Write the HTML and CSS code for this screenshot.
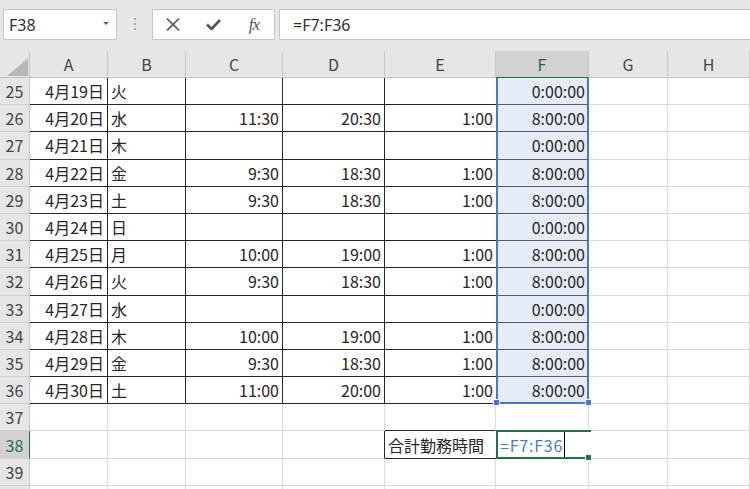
FILE: index.html
```html
<!DOCTYPE html>
<html lang="ja">
<head>
    <meta charset="UTF-8">
    <title>勤務表</title>
    <link rel="stylesheet" href="styles.css">
</head>
<body>
    <div class="topbar">
        <div class="namebox"><span>F38</span><span class="drop"></span></div>
        <div class="grip"><i></i><i></i><i></i></div>
        <div class="fxbox">
            <span class="btn">
                <svg width="14" height="13" viewBox="0 0 14 13"><path d="M1 0.5 L13 12.5 M13 0.5 L1 12.5" stroke="#666" stroke-width="1.8" fill="none"/></svg>
            </span>
            <span class="btn">
                <svg width="15" height="11" viewBox="0 0 15 11"><path d="M1 5.5 L5.5 10 L14 1" stroke="#555" stroke-width="2.6" fill="none"/></svg>
            </span>
            <span class="btn fx">fx</span>
        </div>
        <div class="formula">=F7:F36</div>
    </div>

    <div class="sheet">
        <div class="row hdr">
            <div class="c corner"><svg width="29" height="26" viewBox="0 0 29 26"><polygon points="28,7 28,25 7,25" fill="#b8b8b8"/></svg></div>
            <div class="c ch">A</div>
            <div class="c ch">B</div>
            <div class="c ch">C</div>
            <div class="c ch">D</div>
            <div class="c ch">E</div>
            <div class="c ch on">F</div>
            <div class="c ch">G</div>
            <div class="c ch">H</div>
        </div>

        <div class="row">
            <div class="c rh">25</div>
            <div class="c b r">4月19日</div><div class="c b">火</div>
            <div class="c b r"></div><div class="c b r"></div><div class="c b r nb"></div>
            <div class="c f r">0:00:00</div><div class="c"></div><div class="c"></div>
        </div>
        <div class="row">
            <div class="c rh">26</div>
            <div class="c b r">4月20日</div><div class="c b">水</div>
            <div class="c b r">11:30</div><div class="c b r">20:30</div><div class="c b r nb">1:00</div>
            <div class="c f r">8:00:00</div><div class="c"></div><div class="c"></div>
        </div>
        <div class="row">
            <div class="c rh">27</div>
            <div class="c b r">4月21日</div><div class="c b">木</div>
            <div class="c b r"></div><div class="c b r"></div><div class="c b r nb"></div>
            <div class="c f r">0:00:00</div><div class="c"></div><div class="c"></div>
        </div>
        <div class="row">
            <div class="c rh">28</div>
            <div class="c b r">4月22日</div><div class="c b">金</div>
            <div class="c b r">9:30</div><div class="c b r">18:30</div><div class="c b r nb">1:00</div>
            <div class="c f r">8:00:00</div><div class="c"></div><div class="c"></div>
        </div>
        <div class="row">
            <div class="c rh">29</div>
            <div class="c b r">4月23日</div><div class="c b">土</div>
            <div class="c b r">9:30</div><div class="c b r">18:30</div><div class="c b r nb">1:00</div>
            <div class="c f r">8:00:00</div><div class="c"></div><div class="c"></div>
        </div>
        <div class="row">
            <div class="c rh">30</div>
            <div class="c b r">4月24日</div><div class="c b">日</div>
            <div class="c b r"></div><div class="c b r"></div><div class="c b r nb"></div>
            <div class="c f r">0:00:00</div><div class="c"></div><div class="c"></div>
        </div>
        <div class="row">
            <div class="c rh">31</div>
            <div class="c b r">4月25日</div><div class="c b">月</div>
            <div class="c b r">10:00</div><div class="c b r">19:00</div><div class="c b r nb">1:00</div>
            <div class="c f r">8:00:00</div><div class="c"></div><div class="c"></div>
        </div>
        <div class="row">
            <div class="c rh">32</div>
            <div class="c b r">4月26日</div><div class="c b">火</div>
            <div class="c b r">9:30</div><div class="c b r">18:30</div><div class="c b r nb">1:00</div>
            <div class="c f r">8:00:00</div><div class="c"></div><div class="c"></div>
        </div>
        <div class="row">
            <div class="c rh">33</div>
            <div class="c b r">4月27日</div><div class="c b">水</div>
            <div class="c b r"></div><div class="c b r"></div><div class="c b r nb"></div>
            <div class="c f r">0:00:00</div><div class="c"></div><div class="c"></div>
        </div>
        <div class="row">
            <div class="c rh">34</div>
            <div class="c b r">4月28日</div><div class="c b">木</div>
            <div class="c b r">10:00</div><div class="c b r">19:00</div><div class="c b r nb">1:00</div>
            <div class="c f r">8:00:00</div><div class="c"></div><div class="c"></div>
        </div>
        <div class="row">
            <div class="c rh">35</div>
            <div class="c b r">4月29日</div><div class="c b">金</div>
            <div class="c b r">9:30</div><div class="c b r">18:30</div><div class="c b r nb">1:00</div>
            <div class="c f r">8:00:00</div><div class="c"></div><div class="c"></div>
        </div>
        <div class="row">
            <div class="c rh">36</div>
            <div class="c b r">4月30日</div><div class="c b">土</div>
            <div class="c b r">11:00</div><div class="c b r">20:00</div><div class="c b r nb">1:00</div>
            <div class="c f r last">8:00:00</div><div class="c"></div><div class="c"></div>
        </div>
        <div class="row">
            <div class="c rh">37</div>
            <div class="c"></div><div class="c"></div><div class="c"></div><div class="c"></div>
            <div class="c under"></div><div class="c"></div><div class="c"></div><div class="c"></div>
        </div>
        <div class="row">
            <div class="c rh on">38</div>
            <div class="c"></div><div class="c"></div><div class="c"></div><div class="c boxleft"></div>
            <div class="c box">合計勤務時間</div>
            <div class="c active"><span class="edit">=F7:F36</span></div>
            <div class="c"></div><div class="c"></div>
        </div>
        <div class="row">
            <div class="c rh">39</div>
            <div class="c"></div><div class="c"></div><div class="c"></div><div class="c"></div>
            <div class="c"></div><div class="c"></div><div class="c"></div><div class="c"></div>
        </div>
        <div class="row">
            <div class="c rh"></div>
            <div class="c"></div><div class="c"></div><div class="c"></div><div class="c"></div>
            <div class="c"></div><div class="c"></div><div class="c"></div><div class="c"></div>
        </div>
    </div>
</body>
</html>
```

FILE: styles.css
```css
body {
    margin: 0;
    background: #e6e6e6;
    font-family: "Noto Sans CJK JP", sans-serif;
    height: 489px;
    overflow: hidden;
}
.topbar {
    display: flex;
    align-items: flex-start;
    height: 51px;
    padding: 9px 0 0 3px;
    box-sizing: border-box;
}
.namebox {
    width: 114px;
    height: 31px;
    box-sizing: border-box;
    background: #fff;
    border: 1px solid #c6c6c6;
    display: flex;
    align-items: center;
    justify-content: space-between;
    padding: 0 7px 0 5px;
    font-family: "Noto Sans", sans-serif;
    font-size: 16px;
    color: #333;
}
.drop {
    width: 0;
    height: 0;
    border-left: 3px solid transparent;
    border-right: 3px solid transparent;
    border-top: 3px solid #666;
    margin-bottom: 2px;
}
.grip {
    width: 35px;
    display: flex;
    flex-direction: column;
    align-items: center;
    gap: 3px;
    padding-top: 9px;
}
.grip i {
    width: 2px;
    height: 2px;
    background: #a8a8a8;
}
.fxbox {
    width: 123px;
    height: 31px;
    box-sizing: border-box;
    background: #fff;
    border: 1px solid #c6c6c6;
    display: flex;
    align-items: center;
}
.btn {
    width: 41px;
    display: flex;
    justify-content: center;
    align-items: center;
}
.fx {
    font-family: "Liberation Serif", serif;
    font-style: italic;
    font-size: 17px;
    color: #555;
    letter-spacing: -1px;
}
.formula {
    flex: 1;
    height: 31px;
    box-sizing: border-box;
    margin-left: 4px;
    background: #fff;
    border: 1px solid #c6c6c6;
    border-right: none;
    display: flex;
    align-items: center;
    padding-left: 13px;
    font-family: "Noto Sans", sans-serif;
    font-size: 16px;
    color: #333;
}
.sheet {
    background: #fff;
}
.row {
    display: grid;
    grid-template-columns: 30px 78px 78px 97px 102px 111px 93px 79px 82px;
    height: 27.2px;
}
.row.hdr {
    height: 27px;
}
.c {
    box-sizing: border-box;
    border-right: 1px solid #dadada;
    border-bottom: 1px solid #dadada;
    display: flex;
    align-items: center;
    padding: 0 3px;
    font-size: 16px;
    line-height: 1;
    color: #262626;
    white-space: nowrap;
    position: relative;
}
.r {
    justify-content: flex-end;
}
.corner {
    background: #e6e6e6;
    padding: 0;
    border-right-color: #c4c4c4;
    border-bottom-color: #c4c4c4;
}
.ch {
    background: #e6e6e6;
    justify-content: center;
    color: #444;
    border-right-color: #c8c8c8;
    border-bottom-color: #c4c4c4;
}
.ch.on {
    background: #d2d2d2;
    color: #1e6b40;
    border-bottom: 1px solid #217346;
}
.rh {
    background: #e6e6e6;
    justify-content: center;
    color: #444;
    border-right-color: #c4c4c4;
    border-bottom-color: #d0d0d0;
}
.rh.on {
    background: #d2d2d2;
    color: #217346;
    border-right-color: #217346;
}
.b {
    border-right-color: #262626;
    border-bottom-color: #262626;
}
.nb {
    border-right: none;
}
.f {
    background: #e6edf8;
    border-left: 2px solid #4478d4;
    border-right: 2px solid #4478d4;
    border-bottom-color: #565c66;
    padding-right: 2px;
}
.f.last {
    border-bottom: 2px solid #4478d4;
}
.f.last::before,
.f.last::after {
    content: "";
    position: absolute;
    bottom: -4px;
    width: 5px;
    height: 5px;
    background: #4478d4;
    border: 1px solid #fff;
    z-index: 2;
}
.f.last::before {
    left: -5px;
}
.f.last::after {
    right: -5px;
}
.under {
    border-bottom-color: #262626;
}
.boxleft {
    border-right-color: #262626;
}
.box {
    border-right: none;
    border-bottom-color: #262626;
}
.active {
    border: 2px solid #217346;
    border-right: none;
    padding: 0 0 0 2px;
    align-items: stretch;
    margin-top: -1px;
    margin-right: -2px;
}
.active::after {
    content: "";
    position: absolute;
    right: -1px;
    bottom: -4px;
    width: 5px;
    height: 5px;
    background: #217346;
    border: 1px solid #fff;
    z-index: 2;
}
.edit {
    display: flex;
    align-items: center;
    color: #4a7bd0;
    letter-spacing: 0.8px;
    border-right: 1px solid #000;
    padding-right: 1px;
}
```
